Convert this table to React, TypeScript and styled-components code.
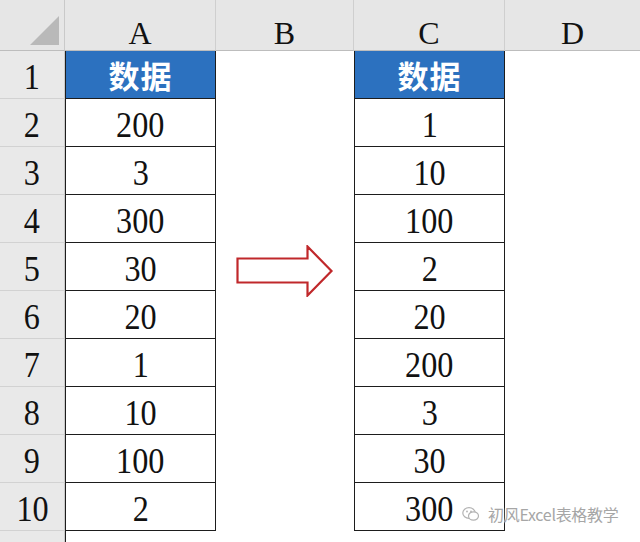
import React from "react";
import styled, { createGlobalStyle } from "styled-components";

const Global = createGlobalStyle`
  html, body { margin: 0; padding: 0; background: #ffffff; overflow: hidden; }
  #root { width: 640px; height: 542px; }
`;

const Sheet = styled.div`
  position: relative;
  width: 640px;
  height: 542px;
  overflow: hidden;
  display: grid;
  grid-template-columns: 65px 151px 138px 151px 1fr;
  grid-template-rows: 51px repeat(10, 48px) 1fr;
  font-family: "Liberation Serif", "Times New Roman", serif;
  color: #111;
`;

const Corner = styled.div`
  background: #e6e6e6;
  border-right: 1px solid #c9c9c9;
  border-bottom: 1px solid #bdbdbd;
  display: flex;
  align-items: flex-end;
  justify-content: flex-end;
  padding: 0 4px 4px 0;
  box-sizing: border-box;
`;

const ColHeader = styled.div<{ $last?: boolean }>`
  background: #e6e6e6;
  border-right: ${(p) => (p.$last ? "none" : "1px solid #cfcfcf")};
  border-bottom: 1px solid #bdbdbd;
  box-sizing: border-box;
  display: flex;
  align-items: flex-end;
  justify-content: center;
  padding-bottom: 1px;
  font-size: 32px;
  line-height: 1;
`;

const RowHeader = styled.div<{ $last?: boolean }>`
  background: #e9e9e9;
  border-right: 1px solid #c9c9c9;
  border-bottom: ${(p) => (p.$last ? "none" : "1px solid #d2d2d2")};
  box-sizing: border-box;
  display: flex;
  align-items: center;
  justify-content: center;
  padding-top: 6px;
  font-size: 35px;
  line-height: 1;
`;

const Cell = styled.div<{ $boxed?: boolean; $head?: boolean; $open?: boolean }>`
  box-sizing: border-box;
  background: ${(p) => (p.$head ? "#2c71bf" : "#ffffff")};
  border-left: ${(p) => (p.$boxed ? "1px solid #1d1d1d" : "none")};
  border-right: ${(p) => (p.$boxed && !p.$open ? "1px solid #1d1d1d" : "none")};
  border-bottom: ${(p) => (p.$boxed && !p.$open ? "1px solid #1d1d1d" : "none")};
  display: flex;
  align-items: center;
  justify-content: center;
  padding-top: ${(p) => (p.$head ? "0" : "6px")};
  font-size: ${(p) => (p.$head ? "31px" : "35px")};
  letter-spacing: ${(p) => (p.$head ? "1px" : "0")};
  line-height: 1;
  color: ${(p) => (p.$head ? "#ffffff" : "#111111")};
  font-family: ${(p) =>
    p.$head
      ? `"Noto Sans CJK SC", "Noto Sans", sans-serif`
      : `"Liberation Serif", "Times New Roman", serif`};
  font-weight: ${(p) => (p.$head ? 700 : 400)};
`;

const Glyph = styled.span`
  display: inline-block;
  transform: scaleX(0.92);
`;

const ArrowWrap = styled.div`
  position: absolute;
  left: 236px;
  top: 245px;
  width: 98px;
  height: 52px;
`;

const Watermark = styled.div`
  position: absolute;
  left: 462px;
  top: 502px;
  display: flex;
  align-items: center;
  gap: 8px;
  font-family: "Noto Sans CJK SC", "Noto Sans", sans-serif;
  font-size: 16px;
  color: #a6a6a6;
  text-shadow: 0 0 2px #ffffff, 0 0 2px #ffffff;
  letter-spacing: -0.3px;
`;

const colA = ["数据", "200", "3", "300", "30", "20", "1", "10", "100", "2"];
const colC = ["数据", "1", "10", "100", "2", "20", "200", "3", "30", "300"];

export default function App() {
  return (
    <>
      <Global />
      <Sheet>
        <Corner>
          <svg width="30" height="30" viewBox="0 0 30 30">
            <polygon points="29,0 29,29 0,29" fill="#b9b9b9" />
          </svg>
        </Corner>
        <ColHeader>A</ColHeader>
        <ColHeader>B</ColHeader>
        <ColHeader>C</ColHeader>
        <ColHeader $last>D</ColHeader>
        {colA.map((a, i) => (
          <React.Fragment key={i}>
            <RowHeader>
              <Glyph>{i + 1}</Glyph>
            </RowHeader>
            <Cell $boxed $head={i === 0}>
              {i === 0 ? a : <Glyph>{a}</Glyph>}
            </Cell>
            <Cell />
            <Cell $boxed $head={i === 0}>
              {i === 0 ? colC[i] : <Glyph>{colC[i]}</Glyph>}
            </Cell>
            <Cell />
          </React.Fragment>
        ))}
        <RowHeader $last />
        <Cell $boxed $open />
        <Cell />
        <Cell />
        <Cell />
        <ArrowWrap>
          <svg width="98" height="52" viewBox="0 0 98 52">
            <polygon
              points="1.5,13.5 71.5,13.5 71.5,1.5 95.5,26 71.5,50.5 71.5,37.5 1.5,37.5"
              fill="#ffffff"
              stroke="#c0282b"
              strokeWidth="2.2"
              strokeLinejoin="miter"
            />
          </svg>
        </ArrowWrap>
        <Watermark>
          <svg width="18" height="16" viewBox="0 0 18 16">
            <ellipse cx="7" cy="7" rx="6.2" ry="5.4" fill="none" stroke="#b3b3b3" strokeWidth="1.2" />
            <ellipse cx="11.5" cy="10" rx="5" ry="4.2" fill="#ffffff" stroke="#b3b3b3" strokeWidth="1.2" />
            <circle cx="5" cy="5.5" r="0.9" fill="#b3b3b3" />
            <circle cx="9" cy="5.5" r="0.9" fill="#b3b3b3" />
          </svg>
          <span>初风Excel表格教学</span>
        </Watermark>
      </Sheet>
    </>
  );
}
